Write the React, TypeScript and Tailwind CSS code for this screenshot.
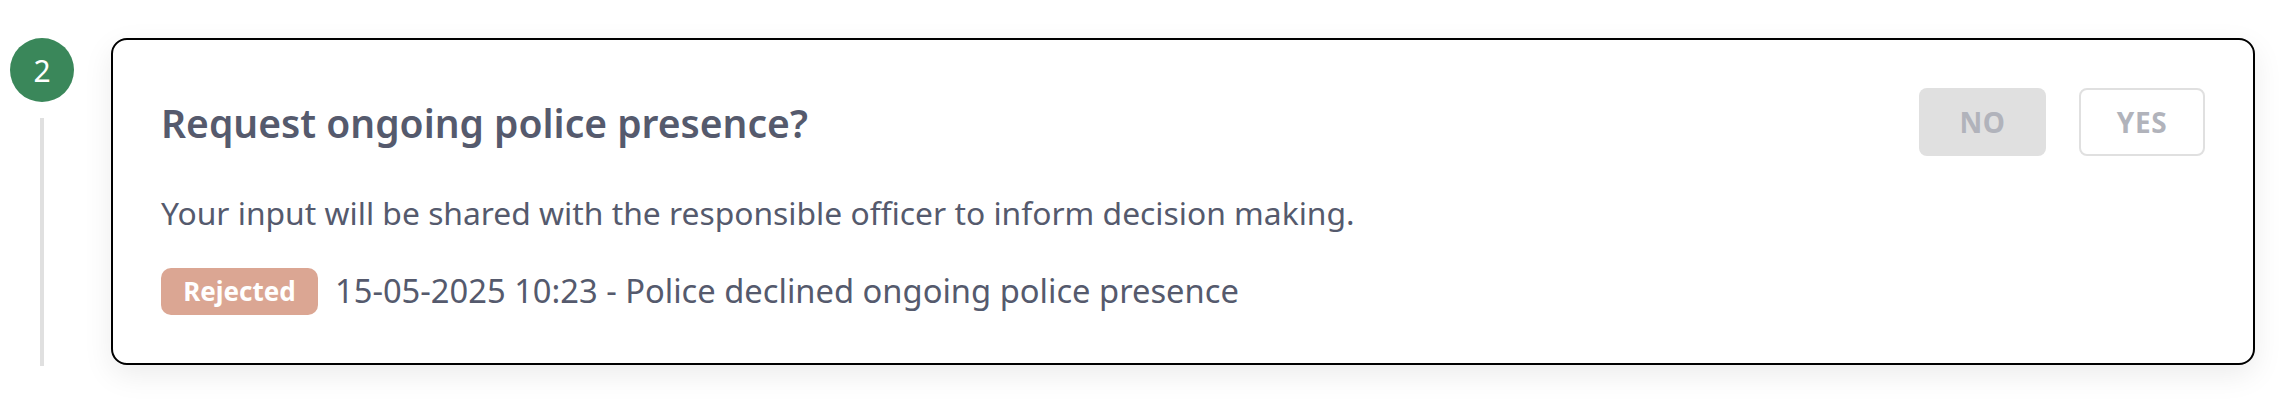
import React from "react";

export default function App() {
  return (
    <div className="min-h-[400px] w-full bg-white" style={{ fontFamily: '"Noto Sans", sans-serif' }}>
      <div className="flex gap-[37px] pl-[10px] pr-[29px] pt-[38px]">
        <div className="flex w-[64px] shrink-0 flex-col items-center">
          <div className="flex h-[64px] w-[64px] items-center justify-center rounded-full bg-[#3a875a] text-[30px] font-normal text-white">
            2
          </div>
          <div className="mt-[16px] h-[248px] w-[4px] bg-[#e0e0e0]" />
        </div>
        <div className="flex h-[327px] flex-1 flex-col rounded-[16px] border-2 border-black bg-white p-12 shadow-[0_10px_30px_rgba(0,0,0,0.08)]">
          <div className="flex items-center justify-between">
            <h2 className="text-[39px] font-semibold leading-none text-[#555a6d]">Request ongoing police presence?</h2>
            <div className="flex gap-[33px]">
              <button className="h-[68px] w-[127px] rounded-[8px] bg-[#e0e0e0] text-[28px] font-bold tracking-[0.02em] text-[#b1b3bb]">NO</button>
              <button className="h-[68px] w-[126px] rounded-[8px] border-2 border-[#e0e0e0] bg-white text-[28px] font-bold tracking-[0.02em] text-[#b1b3bb]">YES</button>
            </div>
          </div>
          <p className="mt-[41px] text-[31.8px] leading-none text-[#555a6d]">
            Your input will be shared with the responsible officer to inform decision making.
          </p>
          <div className="mt-[39px] flex items-center gap-[17px]">
            <span className="flex h-[47px] w-[157px] items-center justify-center rounded-[10px] bg-[#dba693] text-[26px] font-bold text-white">Rejected</span>
            <span className="text-[32.7px] leading-none text-[#555a6d]">15-05-2025 10:23 - Police declined ongoing police presence</span>
          </div>
        </div>
      </div>
    </div>
  );
}
